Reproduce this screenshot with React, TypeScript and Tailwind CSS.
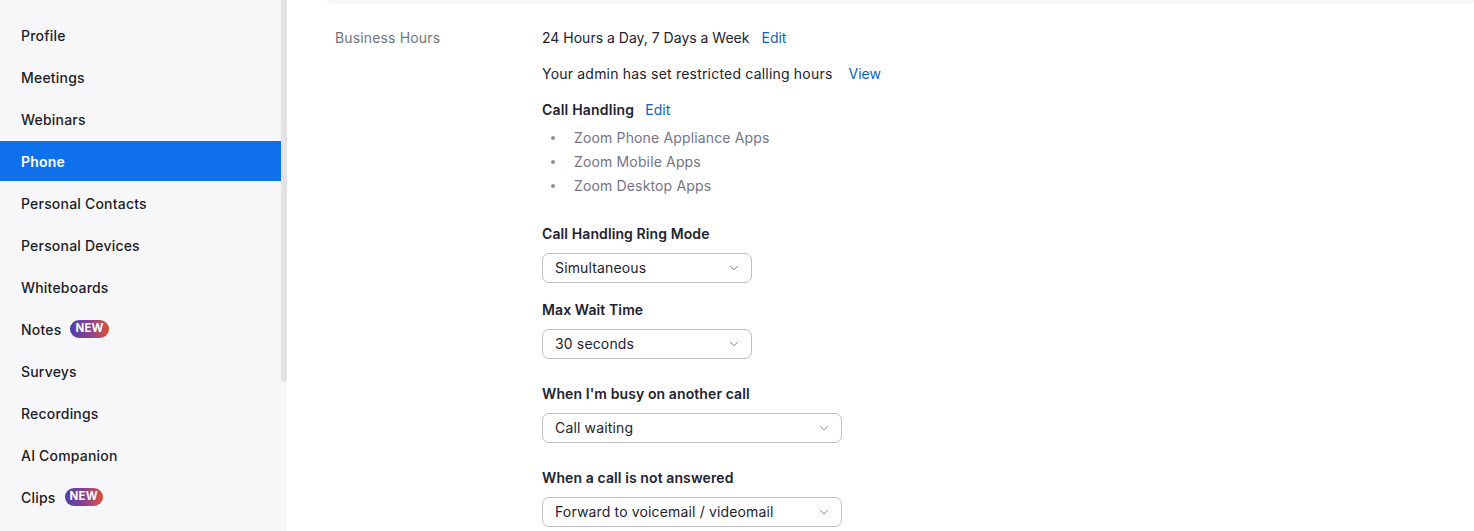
import { ChevronDown } from 'lucide-react';

const NAV = [
  { label: 'Profile' },
  { label: 'Meetings' },
  { label: 'Webinars' },
  { label: 'Phone', active: true },
  { label: 'Personal Contacts' },
  { label: 'Personal Devices' },
  { label: 'Whiteboards' },
  { label: 'Notes', badge: true },
  { label: 'Surveys' },
  { label: 'Recordings' },
  { label: 'AI Companion' },
  { label: 'Clips', badge: true },
];

const APPS = ['Zoom Phone Appliance Apps', 'Zoom Mobile Apps', 'Zoom Desktop Apps'];

function NewBadge() {
  return (
    <span className="ml-[9px] inline-flex h-[18px] items-center rounded-full bg-gradient-to-r from-[#4f3cb0] via-[#8a3f8f] to-[#de4f2a] px-[5px] text-[11.5px] font-bold leading-none tracking-[0.2px] text-white">
      NEW
    </span>
  );
}

function Select({ value, wide }: { value: string; wide?: boolean }) {
  return (
    <div
      className={`mt-[9px] flex h-[30px] items-center justify-between rounded-[7px] border border-[#bdbdc4] bg-white pl-[12px] pr-[10px] text-[14px] tracking-[0.15px] text-[#222230] ${
        wide ? 'w-[300px]' : 'w-[210px]'
      }`}
    >
      <span>{value}</span>
      <ChevronDown className="h-[14px] w-[14px] text-[#6e7680]" strokeWidth={1.6} />
    </div>
  );
}

function Field({ label, value, wide, className = '' }: { label: string; value: string; wide?: boolean; className?: string }) {
  return (
    <div className={className}>
      <div className="text-[14px] font-semibold leading-[20px] tracking-[0.1px] text-[#222230]">{label}</div>
      <Select value={value} wide={wide} />
    </div>
  );
}

export default function App() {
  return (
    <div className="flex h-[531px] w-[1474px] overflow-hidden bg-white font-['Inter','Liberation_Sans',sans-serif]">
      {/* Sidebar */}
      <aside className="flex w-[287px] shrink-0 bg-[#f7f7fa]">
        <nav className="flex w-[281px] flex-col gap-[2px] pt-[15px]">
          {NAV.map((item) => (
            <div
              key={item.label}
              className={`flex h-[40px] items-center pl-[21px] text-[14px] font-medium tracking-[0.2px] ${
                item.active ? 'bg-[#0e71eb] font-semibold text-white' : 'text-[#1d1d26]'
              }`}
            >
              {item.label}
              {item.badge && <NewBadge />}
            </div>
          ))}
        </nav>
        <div className="h-[382px] w-[6px] rounded-b-[3px] bg-[#e3e3e6]" />
      </aside>

      {/* Content */}
      <main className="relative flex-1">
        <div className="ml-[40px] h-[4px] rounded-b-[6px] bg-[#f6f6f7]" />
        <div className="flex pl-[48px] pt-[24px]">
          <div className="w-[207px] text-[14px] leading-[20px] tracking-[0.15px] text-[#6e7680]">Business Hours</div>
          <div className="flex flex-col text-[14px] leading-[20px] text-[#222230]">
            <div>
              24 Hours a Day, 7 Days a Week
              <span className="ml-[12px] text-[#0e5fc2]">Edit</span>
            </div>
            <div className="mt-[16px]">
              <span className="tracking-[0.2px]">Your admin has set restricted calling hours</span>
              <span className="ml-[16px] text-[#0e5fc2]">View</span>
            </div>
            <div className="mt-[16px] font-semibold">
              <span className="tracking-[0.2px]">Call Handling</span>
              <span className="ml-[11px] font-normal text-[#0e5fc2]">Edit</span>
            </div>
            <ul className="mt-[8px] flex flex-col gap-[4px] tracking-[0.15px]">
              {APPS.map((a) => (
                <li key={a} className="flex items-center text-[#747487]">
                  <span className="ml-[9px] mr-[19px] h-[4px] w-[4px] rounded-full bg-[#8e8e99]" />
                  {a}
                </li>
              ))}
            </ul>
            <div className="mt-[28px] flex flex-col">
              <Field label="Call Handling Ring Mode" value="Simultaneous" />
              <Field label="Max Wait Time" value="30 seconds" className="mt-[17px]" />
              <Field label="When I'm busy on another call" value="Call waiting" wide className="mt-[25px]" />
              <Field label="When a call is not answered" value="Forward to voicemail / videomail" wide className="mt-[25px]" />
            </div>
          </div>
        </div>
      </main>
    </div>
  );
}
